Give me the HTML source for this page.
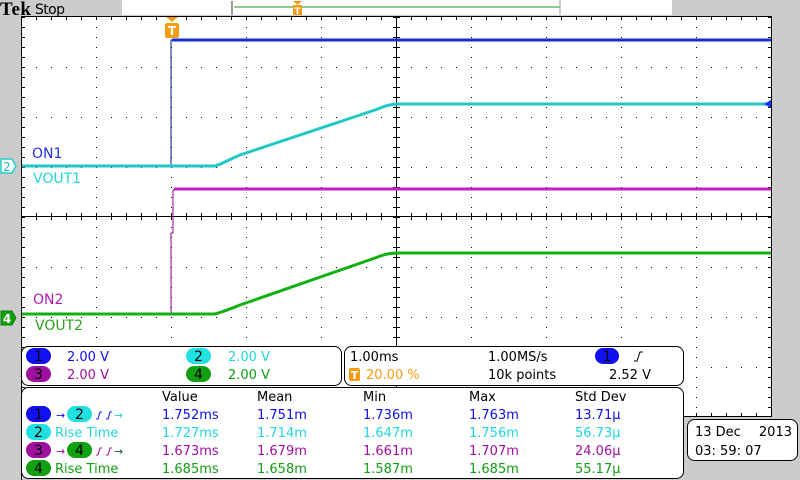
<!DOCTYPE html>
<html><head><style>
body{margin:0;width:800px;height:480px;overflow:hidden;background:#cccccc;font-family:"DejaVu Sans","Liberation Sans",sans-serif;}
svg{position:absolute;left:0;top:0}
</style></head><body>
<svg width="800" height="480" viewBox="0 0 800 480" xmlns="http://www.w3.org/2000/svg" font-family="DejaVu Sans, Liberation Sans, sans-serif">
<rect width="800" height="480" fill="#cccccc"/>
<!-- top bar -->
<text x="0" y="15" font-family="Liberation Serif, serif" font-weight="bold" font-size="19" fill="#000" textLength="31">Tek</text>
<text x="35" y="14" font-size="14" fill="#000" textLength="30">Stop</text>
<rect x="122" y="0" width="110" height="15" fill="#fff"/>
<rect x="232" y="0" width="440" height="15" fill="#fff"/>
<line x1="232" y1="1" x2="232" y2="15" stroke="#999" stroke-width="2"/>
<line x1="234" y1="7" x2="560" y2="7" stroke="#1a9a1a" stroke-width="1"/>
<line x1="560" y1="0" x2="560" y2="15" stroke="#999"/>
<path d="M293 1 h9 l-4.5 4 z" fill="#f39c12"/>
<rect x="293" y="5" width="9" height="10" fill="#f39c12"/>
<text x="297.5" y="14" font-size="9" font-weight="bold" fill="#fff" text-anchor="middle">T</text>
<!-- graticule -->
<rect x="21.5" y="16.5" width="750" height="400" fill="#fff" stroke="#000"/>
<line x1="21.5" y1="416" x2="21.5" y2="480" stroke="#000"/>
<g stroke="#000" stroke-width="1">
<line x1="396.5" y1="16" x2="396.5" y2="417"/>
<line x1="21" y1="216.5" x2="772" y2="216.5"/>
</g>
<g id="dots" fill="#000">
</g>
<!-- traces -->
<g fill="none" stroke-linejoin="round">
<path d="M22 166 H171 V40 H771" stroke="#0a1aa0" stroke-width="1"/>
<path d="M172 40 H771" stroke="#1530d0" stroke-width="3"/>
<path d="M22 166 H215 C222 164 228 160 240 155 L375 110 C385 106 390 104 400 104 H771" stroke="#20c8c8" stroke-width="3"/>
<path d="M171 314 V233 H173 V190 H771" stroke="#8a0a8a" stroke-width="1"/>
<path d="M174 189 H771" stroke="#c020c0" stroke-width="3"/>
<path d="M22 314 H215 C222 312 228 310 240 305 L375 258 C385 254 390 253 400 253 H771" stroke="#10b010" stroke-width="3"/>
</g>
<path d="M771 100 l-7 4 l7 4 z" fill="#1530ff"/>
<!-- trigger marker -->
<path d="M166 17 h12 l-6 5 z" fill="#f39c12"/>
<rect x="165" y="23" width="14" height="15" rx="2" fill="#f39c12"/>
<text x="172" y="35" font-size="12" font-weight="bold" fill="#fff" text-anchor="middle">T</text>
<!-- channel markers -->
<path d="M1 159 h11 l4 7 l-4 7 h-11 z" fill="#fff" stroke="#20d0d0" stroke-width="1.5"/>
<text x="7" y="171" font-size="12" fill="#20c0c0" text-anchor="middle">2</text>
<path d="M1 311 h11 l4 7 l-4 7 h-11 z" fill="#10a010" stroke="#0a800a"/>
<text x="7" y="323" font-size="12" font-weight="bold" fill="#fff" text-anchor="middle">4</text>
<g font-size="14">
<text x="32" y="158" fill="#2030e0">ON1</text>
<text x="33" y="183" fill="#20d8d8">VOUT1</text>
<text x="33" y="304" fill="#b020b0">ON2</text>
<text x="35" y="330" fill="#30a020">VOUT2</text>
</g>
<!-- panels -->
<g fill="#fff" stroke="#000">
<rect x="21.5" y="346.5" width="320" height="39" rx="7"/>
<rect x="344.5" y="346.5" width="339" height="39" rx="7"/>
<rect x="21.5" y="387.5" width="662" height="91" rx="7"/>
<rect x="687.5" y="419.5" width="110" height="41" rx="7"/>
</g>
<g font-size="13">
<rect x="26" y="348" width="25" height="16" rx="8" fill="#1010f0"/><text x="38.5" y="361" text-anchor="middle" fill="#000" font-size="14">1</text>
<text x="67" y="361" fill="#1010f0">2.00 V</text>
<rect x="186" y="348" width="25" height="16" rx="8" fill="#20e0e0"/><text x="198.5" y="361" text-anchor="middle" fill="#000" font-size="14">2</text>
<text x="228" y="361" fill="#20d8d8">2.00 V</text>
<rect x="26" y="366" width="25" height="16" rx="8" fill="#a010a0"/><text x="38.5" y="379" text-anchor="middle" fill="#000" font-size="14">3</text>
<text x="67" y="379" fill="#a010a0">2.00 V</text>
<rect x="186" y="366" width="25" height="16" rx="8" fill="#10a010"/><text x="198.5" y="379" text-anchor="middle" fill="#000" font-size="14">4</text>
<text x="228" y="379" fill="#10a010">2.00 V</text>

<text x="350" y="361" fill="#000">1.00ms</text>
<rect x="349" y="368" width="11" height="13" rx="2" fill="#f39c12"/><text x="354.5" y="379" font-size="11" font-weight="bold" text-anchor="middle" fill="#fff">T</text>
<text x="366" y="379" fill="#f39c12">20.00 %</text>
<text x="488" y="361" fill="#000">1.00MS/s</text>
<text x="488" y="379" fill="#000">10k points</text>
<rect x="595" y="348" width="24" height="16" rx="8" fill="#1010f0"/><text x="607" y="361" text-anchor="middle" fill="#000" font-size="14">1</text>
<path d="M634 361 l3 0 l3 -9 l3 0" stroke="#000" fill="none"/>
<text x="609" y="379" fill="#000">2.52 V</text>

<g fill="#000"><text x="162" y="401">Value</text><text x="257" y="401">Mean</text><text x="363" y="401">Min</text><text x="469" y="401">Max</text><text x="575" y="401">Std Dev</text></g>
<rect x="26" y="406" width="25" height="16" rx="8" fill="#1010f0"/><text x="38.5" y="419" text-anchor="middle" fill="#000" font-size="14">1</text>
<text x="56" y="419" fill="#1010f0" font-size="11">→</text>
<rect x="67" y="406" width="25" height="16" rx="8" fill="#20e0e0"/><text x="79.5" y="419" text-anchor="middle" fill="#000" font-size="14">2</text>
<path d="M96 419 h2 l2 -7 h2 M106 419 h2 l2 -7 h2" stroke="#1010f0" fill="none"/><text x="114" y="419" font-size="11" fill="#20d8d8">→</text>
<rect x="26" y="424" width="25" height="16" rx="8" fill="#20e0e0"/><text x="38.5" y="437" text-anchor="middle" fill="#000" font-size="14">2</text>
<text x="55" y="437" fill="#20d8d8">Rise Time</text>
<rect x="26" y="442" width="25" height="16" rx="8" fill="#a010a0"/><text x="38.5" y="455" text-anchor="middle" fill="#000" font-size="14">3</text>
<text x="56" y="455" fill="#a010a0" font-size="11">→</text>
<rect x="67" y="442" width="25" height="16" rx="8" fill="#10a010"/><text x="79.5" y="455" text-anchor="middle" fill="#000" font-size="14">4</text>
<path d="M96 455 h2 l2 -7 h2 M106 455 h2 l2 -7 h2" stroke="#a010a0" fill="none"/><text x="114" y="455" font-size="11" fill="#205040">→</text>
<rect x="26" y="460" width="25" height="16" rx="8" fill="#10a010"/><text x="38.5" y="473" text-anchor="middle" fill="#000" font-size="14">4</text>
<text x="55" y="473" fill="#10a010">Rise Time</text>

<g fill="#1010f0"><text x="162" y="419">1.752ms</text><text x="257" y="419">1.751m</text><text x="363" y="419">1.736m</text><text x="469" y="419">1.763m</text><text x="575" y="419">13.71µ</text></g>
<g fill="#20d8d8"><text x="162" y="437">1.727ms</text><text x="257" y="437">1.714m</text><text x="363" y="437">1.647m</text><text x="469" y="437">1.756m</text><text x="575" y="437">56.73µ</text></g>
<g fill="#a010a0"><text x="162" y="455">1.673ms</text><text x="257" y="455">1.679m</text><text x="363" y="455">1.661m</text><text x="469" y="455">1.707m</text><text x="575" y="455">24.06µ</text></g>
<g fill="#10a010"><text x="162" y="473">1.685ms</text><text x="257" y="473">1.658m</text><text x="363" y="473">1.587m</text><text x="469" y="473">1.685m</text><text x="575" y="473">55.17µ</text></g>

<text x="695" y="436" fill="#000">13 Dec</text><text x="792" y="436" fill="#000" text-anchor="end">2013</text>
<text x="695" y="455" fill="#000">03: 59: 07</text>
</g>
</svg>
<script>
(function(){
var g=document.getElementById('dots'),s='';
for(var k=1;k<10;k++){var x=21+75*k;if(k==5)continue;for(var y=17;y<417;y+=10)s+='<rect x="'+x+'" y="'+y+'" width="1" height="1"/>';}
for(var j=1;j<8;j++){var y=17+50*j;if(j==4)continue;for(var x=21;x<772;x+=15)s+='<rect x="'+x+'" y="'+y+'" width="1" height="1"/>';}
for(var x=21;x<772;x+=15){s+='<rect x="'+x+'" y="213" width="1" height="7"/>';s+='<rect x="'+x+'" y="17" width="1" height="3"/>';s+='<rect x="'+x+'" y="413" width="1" height="3"/>';}
for(var y=17;y<417;y+=10){s+='<rect x="393" y="'+y+'" width="7" height="1"/>';s+='<rect x="22" y="'+y+'" width="3" height="1"/>';s+='<rect x="768" y="'+y+'" width="3" height="1"/>';}
g.innerHTML=s;
})();
</script>
</body></html>
